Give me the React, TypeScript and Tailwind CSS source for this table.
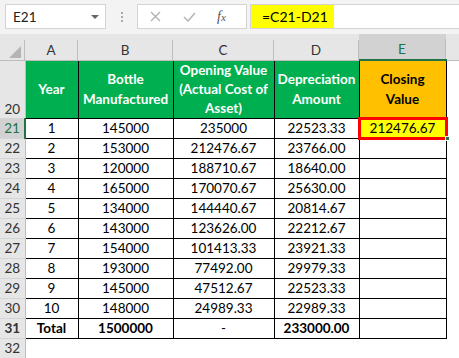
import React from "react";

const rows = [
  ["1", "145000", "235000", "22523.33", "212476.67"],
  ["2", "153000", "212476.67", "23766.00", ""],
  ["3", "120000", "188710.67", "18640.00", ""],
  ["4", "165000", "170070.67", "25630.00", ""],
  ["5", "134000", "144440.67", "20814.67", ""],
  ["6", "143000", "123626.00", "22212.67", ""],
  ["7", "154000", "101413.33", "23921.33", ""],
  ["8", "193000", "77492.00", "29979.33", ""],
  ["9", "145000", "47512.67", "22523.33", ""],
  ["10", "148000", "24989.33", "22989.33", ""],
];

const cols = ["A", "B", "C", "D", "E"];
const widths = ["w-[53px]", "w-[95px]", "w-[101px]", "w-[85px]", "w-[87px]"];

function RowHead({ n, active = false, tall = false }: { n: number; active?: boolean; tall?: boolean }) {
  return (
    <td
      className={[
        "w-[25px] p-0 text-center border-b border-b-[#d4d4d4]",
        tall ? "align-bottom pb-[1px]" : "align-middle",
        active
          ? "bg-[#d2d2d2] text-[#217346] border-r-2 border-r-[#217346]"
          : "bg-[#e6e6e6] text-[#333] border-r border-r-[#bdbdbd]",
      ].join(" ")}
    >
      {n}
    </td>
  );
}

export default function App() {
  return (
    <div className="w-[459px] h-[358px] overflow-hidden bg-white text-[13.5px] leading-[16px] font-['Lato','Liberation_Sans',sans-serif] text-black">
      {/* formula bar */}
      <div className="h-[34px] bg-[#f3f3f3] flex items-start pt-[4px] pl-[5px]">
        <div className="w-[101px] h-[25px] bg-white border border-[#d4d4d4] flex items-center justify-between pl-[7px] pr-[6px] text-[#222]">
          <span>E21</span>
          <span className="w-0 h-0 border-l-[4px] border-r-[4px] border-t-[4px] border-l-transparent border-r-transparent border-t-[#666]" />
        </div>
        <div className="w-[31px] h-[25px] flex flex-col items-center justify-center gap-[2px]">
          <span className="w-[2px] h-[2px] bg-[#aaa]" />
          <span className="w-[2px] h-[2px] bg-[#aaa]" />
          <span className="w-[2px] h-[2px] bg-[#aaa]" />
        </div>
        <div className="w-[110px] h-[25px] bg-white border border-[#d4d4d4] flex items-center pl-[12px]">
          <svg width="11" height="11" viewBox="0 0 11 11" stroke="#b0b0b0" strokeWidth="1.3">
            <path d="M1 1L10 10M10 1L1 10" />
          </svg>
          <svg className="ml-[22px]" width="13" height="10" viewBox="0 0 13 10" stroke="#b8b8b8" strokeWidth="1.6" fill="none">
            <path d="M1 5L5 9L12 1" />
          </svg>
          <span className="ml-[21px] italic text-[#555] font-['Liberation_Serif',serif] text-[14px]">
            f<span className="text-[11px]">x</span>
          </span>
        </div>
        <div className="ml-[3px] flex-1 h-[25px] bg-white border border-r-0 border-[#d4d4d4] flex">
          <div className="w-[83px] h-full bg-[#ffff00] flex items-center pl-[11px] text-[14px]">=C21-D21</div>
        </div>
      </div>

      <table className="table-fixed border-collapse w-[459px]">
        <thead>
          <tr className="h-[26px]">
            <th className="w-[25px] p-0 bg-[#e6e6e6] align-bottom border-b border-b-[#bdbdbd]">
              <div className="h-[20px] border-r border-[#bdbdbd] flex items-end justify-end pr-[3px] pb-[2px]">
                <svg width="12" height="12" viewBox="0 0 12 12">
                  <path d="M12 0L12 12L0 12Z" fill="#b4b4b4" />
                </svg>
              </div>
            </th>
            {cols.map((c, i) => (
              <th
                key={c}
                className={[
                  widths[i],
                  "p-0 font-normal align-bottom",
                  c === "E"
                    ? "bg-[#d2d2d2] border-b-2 border-b-[#217346]"
                    : "bg-[#e6e6e6] border-b border-b-[#bdbdbd]",
                ].join(" ")}
              >
                <div
                  className={[
                    "h-[20px] flex items-center justify-center border-r border-[#bdbdbd]",
                    c === "E" ? "text-[#217346] bg-[#d2d2d2]" : "text-[#333]",
                  ].join(" ")}
                >
                  {c}
                </div>
              </th>
            ))}
            <th className="p-0 bg-[#e6e6e6] border-b border-b-[#bdbdbd]" />
          </tr>
        </thead>
        <tbody>
          <tr className="h-[57px]">
            <RowHead n={20} tall />
            <td className="p-0 bg-[#00b050] text-white font-bold text-center border border-black leading-[20px]">Year</td>
            <td className="p-0 bg-[#00b050] text-white font-bold text-center border border-black leading-[20px]">
              Bottle
              <br />
              Manufactured
            </td>
            <td className="p-0 bg-[#00b050] text-white font-bold text-center border border-black leading-[19px]">
              Opening Value
              <br />
              (Actual Cost of
              <br />
              Asset)
            </td>
            <td className="p-0 bg-[#00b050] text-white font-bold text-center border border-black leading-[20px]">
              Depreciation
              <br />
              Amount
            </td>
            <td className="p-0 bg-[#ffc000] text-black font-bold text-center border border-black leading-[20px]">
              Closing
              <br />
              Value
            </td>
            <td className="p-0" />
          </tr>
          {rows.map((r, i) => (
            <tr key={i} className="h-[20px]">
              <RowHead n={21 + i} active={i === 0} />
              {r.map((v, j) => (
                <td
                  key={j}
                  className={[
                    "p-0 text-center border border-black",
                    i === 0 && j === 4 ? "bg-[#ffff00] relative" : "",
                  ].join(" ")}
                >
                  {v}
                  {i === 0 && j === 4 && (
                    <>
                      <span className="absolute -inset-[2px] border-[3px] border-[#ff0000]" />
                      <span className="absolute -right-[4px] -bottom-[3px] w-[5px] h-[5px] bg-[#217346] border border-white" />
                    </>
                  )}
                </td>
              ))}
              <td className="p-0" />
            </tr>
          ))}
          <tr className="h-[20px] font-bold">
            <RowHead n={31} />
            <td className="p-0 text-center border border-black">Total</td>
            <td className="p-0 text-center border border-black">1500000</td>
            <td className="p-0 text-center border border-black font-normal">-</td>
            <td className="p-0 text-center border border-black">233000.00</td>
            <td className="p-0 border border-black" />
            <td className="p-0" />
          </tr>
          <tr className="h-[20px]">
            <RowHead n={32} />
            <td colSpan={6} className="p-0" />
          </tr>
        </tbody>
      </table>
    </div>
  );
}
